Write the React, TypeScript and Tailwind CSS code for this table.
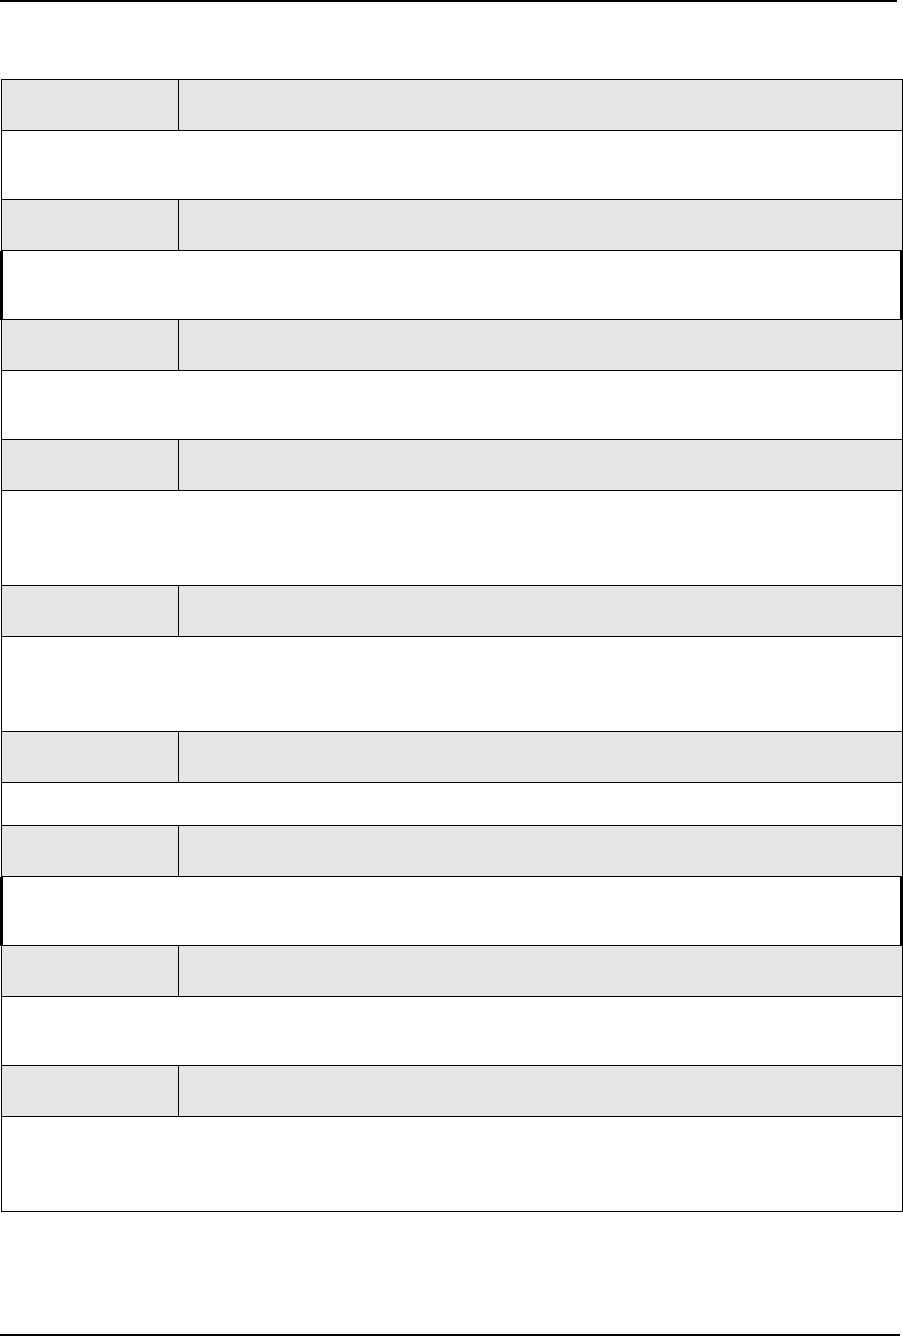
import React from "react";

const bodies: { h: string; thick?: boolean }[] = [
  { h: "h-[68px]" },
  { h: "h-[68px]", thick: true },
  { h: "h-[68px]" },
  { h: "h-[94px]" },
  { h: "h-[94px]" },
  { h: "h-[42px]" },
  { h: "h-[68px]", thick: true },
  { h: "h-[68px]" },
  { h: "h-[94px]" },
];

function Header() {
  return (
    <div className="ml-[1px] w-[902px] flex h-[51px] border-x border-b border-black bg-[#e5e5e5]">
      <div className="w-[177px] border-r border-black" />
      <div className="flex-1" />
    </div>
  );
}

export default function App() {
  return (
    <div className="w-[903px] h-[1336px] bg-white font-['Liberation_Sans',Arial,sans-serif]">
      <div className="h-[2px] w-[897px] bg-black" />
      <div className="mt-[77px]">
        <div className="ml-[1px] w-[902px] h-px bg-black" />
        {bodies.map((b, i) => (
          <div key={i}>
            <Header />
            {b.thick ? (
              <div className={`w-[897px] ${b.h} box-content border-x-[3px] border-b border-black bg-white`} />
            ) : (
              <div className="ml-[1px] w-[902px] border-b border-black bg-white">
                <div className={`${b.h} border-x border-black`} />
              </div>
            )}
          </div>
        ))}
      </div>
      <div className="mt-[122px] h-[2px] w-[900px] bg-black" />
    </div>
  );
}
